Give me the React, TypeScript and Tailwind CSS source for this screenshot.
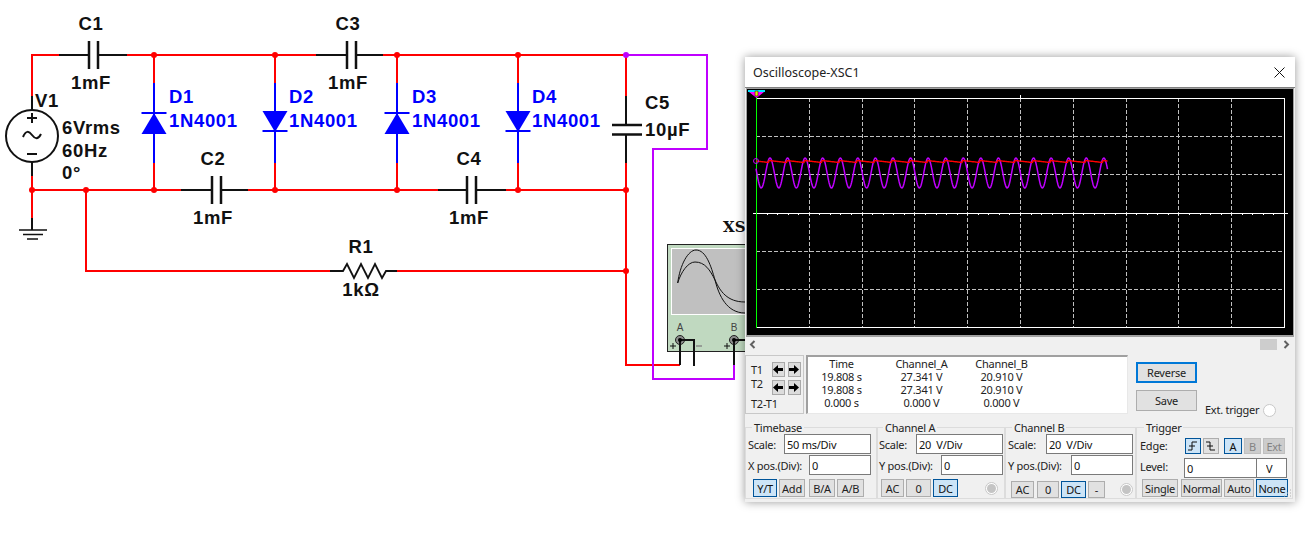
import React from 'react';

const RED = '#ff0000';
const BLUE = '#0000ff';
const PURPLE = '#bf00ff';

const Wire: React.FC<{ d: string; color?: string; w?: number }> = ({ d, color = RED, w = 2 }) => (
  <path d={d} fill="none" stroke={color} strokeWidth={w} />
);

const Dot: React.FC<{ x: number; y: number; color?: string }> = ({ x, y, color = RED }) => (
  <circle cx={x} cy={y} r={3} fill={color} />
);

const Label: React.FC<{ x: number; y: number; mid?: boolean; blue?: boolean; children: React.ReactNode }> = ({ x, y, mid, blue, children }) => (
  <text x={x} y={y - 1} dominantBaseline="central" textAnchor={mid ? 'middle' : 'start'} fill={blue ? BLUE : '#111'} className="font-['Liberation_Sans'] font-bold text-[18.5px] tracking-[0.65px]">
    {children}
  </text>
);

// diode pointing up has the bar on top, pointing down has it at the bottom
const Diode: React.FC<{ x: number; up?: boolean }> = ({ x, up }) => (
  <g>
    <Wire d={`M${x} 55V83`} />
    <Wire d={`M${x} 163V190`} />
    <Wire d={`M${x} 83V163`} color={BLUE} />
    {up ? (
      <>
        <path d={`M${x - 12.5} 113H${x + 12.5}`} stroke={BLUE} strokeWidth={2} />
        <polygon points={`${x},113 ${x + 12.5},134 ${x - 12.5},134`} fill={BLUE} />
      </>
    ) : (
      <>
        <polygon points={`${x - 12.5},111 ${x + 12.5},111 ${x},132`} fill={BLUE} />
        <path d={`M${x - 12.5} 131H${x + 12.5}`} stroke={BLUE} strokeWidth={2} />
      </>
    )}
  </g>
);

// horizontal capacitor, x0..x1 are the lead ends, p1/p2 the plates
const Cap: React.FC<{ x0: number; x1: number; p1: number; p2: number; y: number }> = ({ x0, x1, p1, p2, y }) => (
  <g stroke="#111" strokeWidth={2} fill="none">
    <path d={`M${x0} ${y}H${p1}M${p2} ${y}H${x1}`} />
    <path d={`M${p1} ${y - 14}V${y + 14}M${p2} ${y - 14}V${y + 14}`} strokeWidth={2.5} />
  </g>
);

const Schematic: React.FC = () => (
  <svg width={1305} height={540} className="block">
    {/* wires */}
    <Wire d="M32 96V55H59M127 55H316M383 55H626V96" />
    <Wire d="M32 176V218M32 190H181M248 190H438M506 190H626M626 163V365H680" />
    <Wire d="M86 190V271H330M397 271H626" />
    <Wire d="M626 55H707V149H653V379H734V365" color={PURPLE} />

    {/* C1..C4 */}
    <Cap x0={59} x1={127} p1={89} p2={98} y={55} />
    <Cap x0={316} x1={383} p1={347} p2={356} y={55} />
    <Cap x0={181} x1={248} p1={212} p2={221} y={190} />
    <Cap x0={438} x1={506} p1={467} p2={476} y={190} />

    {/* C5 */}
    <g stroke="#111" fill="none">
      <path d="M626 96V125M626 134V163" strokeWidth={2} />
      <path d="M612 125H642M612 134.5H642" strokeWidth={2.5} />
    </g>

    <Diode x={154} up />
    <Diode x={275} />
    <Diode x={397} up />
    <Diode x={518} />

    {/* V1 */}
    <g stroke="#111" fill="none" strokeWidth={2}>
      <path d="M32 96V110M32 162V176" />
      <circle cx={32} cy={136} r={26} />
      <path d="M27 118H37M32 113V123M27 154H37" />
      <path d="M23 137C26 130 29 131 32 135C35 139 38 140 41 134" />
    </g>

    {/* ground */}
    <g stroke="#111" fill="none" strokeWidth={2}>
      <path d="M32 218V230" />
      <path d="M19 230H47M23 234.5H43M27 239H38" strokeWidth={1.5} />
    </g>

    {/* R1 */}
    <path d="M330 271H343L347 264L354 278L361 264L368 278L375 264L382 278L386 271H397" fill="none" stroke="#111" strokeWidth={1.8} />

    {/* junctions */}
    <Dot x={154} y={55} />
    <Dot x={275} y={55} />
    <Dot x={397} y={55} />
    <Dot x={518} y={55} />
    <Dot x={626} y={55} color={PURPLE} />
    <Dot x={32} y={190} />
    <Dot x={86} y={190} />
    <Dot x={154} y={190} />
    <Dot x={275} y={190} />
    <Dot x={397} y={190} />
    <Dot x={518} y={190} />
    <Dot x={626} y={190} />
    <Dot x={626} y={271} />

    {/* labels */}
    <Label x={91} y={24} mid>C1</Label>
    <Label x={91} y={83} mid>1mF</Label>
    <Label x={348} y={24} mid>C3</Label>
    <Label x={348} y={83} mid>1mF</Label>
    <Label x={213} y={159} mid>C2</Label>
    <Label x={213} y={218} mid>1mF</Label>
    <Label x={469} y={159} mid>C4</Label>
    <Label x={469} y={218} mid>1mF</Label>
    <Label x={35} y={101}>V1</Label>
    <Label x={62} y={128}>6Vrms</Label>
    <Label x={62} y={151}>60Hz</Label>
    <Label x={62} y={173}>0°</Label>
    <Label x={169} y={97} blue>D1</Label>
    <Label x={169} y={121} blue>1N4001</Label>
    <Label x={289} y={97} blue>D2</Label>
    <Label x={289} y={121} blue>1N4001</Label>
    <Label x={412} y={97} blue>D3</Label>
    <Label x={412} y={121} blue>1N4001</Label>
    <Label x={532} y={97} blue>D4</Label>
    <Label x={532} y={121} blue>1N4001</Label>
    <Label x={645} y={103}>C5</Label>
    <Label x={645} y={130}>10µF</Label>
    <Label x={361} y={247} mid>R1</Label>
    <Label x={361} y={290} mid>1kΩ</Label>

    {/* XSC1 instrument */}
    <rect x={667.5} y={244.5} width={110} height={107} fill="#c0d9c0" stroke="#222" />
    <rect x={671.5} y={248.5} width={100} height={66} fill="#c0c0c0" stroke="#fff" />
    <path d="M677.7 283C680 265 688 250 696 250C706 250 711 266 715 280C719 296 727 313 745 313" fill="none" stroke="#111" />
    <path d="M677.7 283C681 272 688 262 695 262C705 262 710 270 715 280C720 291 727 302 745 302" fill="none" stroke="#111" />
    <text x={680} y={327} textAnchor="middle" dominantBaseline="central" fill="#444" className="font-['Liberation_Sans'] text-[10px]">A</text>
    <text x={734} y={327} textAnchor="middle" dominantBaseline="central" fill="#444" className="font-['Liberation_Sans'] text-[10px]">B</text>
    <path d="M670 346H676M673 343V349M724 346H730M727 343V349" stroke="#111" />
    <path d="M696 346H702" stroke="#888" strokeWidth={1.5} />
    <circle cx={680} cy={340} r={4.5} fill="#8c8c8c" stroke="#222" />
    <circle cx={734} cy={340} r={4.5} fill="#8c8c8c" stroke="#222" />
    <path d="M680 340V365M680 340H694V366M734 340V365M734 340H745" fill="none" stroke="#111" strokeWidth={2} />
    <circle cx={680} cy={340} r={2} fill="#000" />
    <circle cx={734} cy={340} r={2} fill="#000" />
    <text x={723} y={227} dominantBaseline="central" fill="#111" className="font-['DejaVu_Serif'] font-bold text-[15px]">XSC1</text>
  </svg>
);

const vGrid = [809, 862, 914, 967, 1020, 1073, 1126, 1178, 1231];
const hGrid = [136, 174, 251, 289];

const samples = Array.from({ length: 704 }, (_, i) => 756 + i * 0.5);
const PERIOD = 17.57;

const purplePts = samples
  .map((x) => `${x},${(173 - 15 * Math.cos((2 * Math.PI * (x - 770)) / PERIOD)).toFixed(1)}`)
  .join(' ');

const redPts = samples
  .map((x) => {
    const phase = (((x - 769) % PERIOD) + PERIOD) % PERIOD;
    return `${x},${(160.5 + (phase / PERIOD) * 2).toFixed(1)}`;
  })
  .join(' ');

const ticks = Array.from({ length: 50 }, (_, i) => 756 + i * 10.56);

// plot coordinates are page coordinates shifted by the viewBox
const ScopePlot: React.FC = () => (
  <svg width={546} height={246} viewBox="747 89 546 246" className="block bg-black">
    <g stroke="#c0c0c0" strokeDasharray="4 2" shapeRendering="crispEdges">
      {vGrid.map((x) => (
        <path key={x} d={`M${x + 0.5} 98V327`} />
      ))}
      {hGrid.map((y) => (
        <path key={y} d={`M756 ${y + 0.5}H1284`} />
      ))}
    </g>
    <g stroke="#fff" fill="none" shapeRendering="crispEdges">
      <path d="M756 98.5H1284.5V327.5H756" />
      <path d="M753 213.5H1288" />
      <path d="M1020.5 95V98" />
      {ticks.map((x) => (
        <path key={x} d={`M${Math.round(x) + 0.5} 214V215`} />
      ))}
    </g>
    <path d="M756.5 92V328" stroke="#00ff00" strokeWidth={1} shapeRendering="crispEdges" />
    <polyline points={purplePts} fill="none" stroke={PURPLE} strokeWidth={1.5} />
    <polyline points={redPts} fill="none" stroke={RED} strokeWidth={1.4} />
    <circle cx={756} cy={161} r={2.5} fill="none" stroke={PURPLE} />
    <rect x={748} y={90} width={17} height={2} fill="#00e5ff" />
    <polygon points="749,92 764,92 756.5,98" fill="#ff00ff" />
    <rect x={755} y={91} width={3} height={5} fill="#e6e600" stroke="#000" strokeWidth={0.5} />
  </svg>
);

type BtnKind = 'normal' | 'active' | 'off';

const kinds: Record<BtnKind, string> = {
  normal: 'bg-[#e1e1e1] border-[#adadad] text-[#222]',
  active: 'bg-[#cce4f7] border-[#005499] text-[#111]',
  off: 'bg-[#cccccc] border-[#bfbfbf] text-[#838383]',
};

const Btn: React.FC<{ kind?: BtnKind; className: string; children: React.ReactNode }> = ({ kind = 'normal', className, children }) => (
  <button className={`flex items-center justify-center border ${kinds[kind]} ${className}`}>{children}</button>
);

const Field: React.FC<{ value: string; className: string }> = ({ value, className }) => (
  <input readOnly value={value} className={`border border-[#7a7a7a] bg-white pl-[2px] text-[#111] outline-none ${className}`} />
);

const Radio: React.FC<{ filled?: boolean }> = ({ filled }) => (
  <span className="flex h-[13px] w-[13px] items-center justify-center rounded-full border border-[#c8c8c8] bg-white">
    {filled && <span className="h-[9px] w-[9px] rounded-full bg-[#c4c4c4]" />}
  </span>
);

const Arrow: React.FC<{ right?: boolean }> = ({ right }) => (
  <button className="flex h-[15px] w-[13px] items-center justify-center border border-[#a9a9a9] bg-[#dcdcdc]">
    <svg width={11} height={9} viewBox="0 0 11 9">
      <path d={right ? 'M0 3H5V0L10 4.5L5 9V6H0Z' : 'M10 3H5V0L0 4.5L5 9V6H10Z'} fill="#000" />
    </svg>
  </button>
);

const Legend: React.FC<{ children: React.ReactNode }> = ({ children }) => (
  <legend className="ml-[4px] px-[2px] leading-[13px]">{children}</legend>
);

const Scope: React.FC = () => (
  <div className="absolute left-[745px] top-[57px] flex h-[445px] w-[550px] flex-col bg-[#f0f0f0] font-['Noto_Sans'] text-[11px] leading-[13px] tracking-[-0.25px] text-[#222] shadow-[0_0_9px_rgba(0,0,0,0.4)]">
    {/* title bar */}
    <div className="flex h-[31px] shrink-0 items-center justify-between border-b border-[#808080] bg-white pl-[8px] pr-[10px] text-[12.5px] tracking-normal">
      <span>Oscilloscope-XSC1</span>
      <svg width={11} height={11} viewBox="0 0 11 11">
        <path d="M0.5 0.5L10.5 10.5M10.5 0.5L0.5 10.5" stroke="#111" fill="none" />
      </svg>
    </div>

    <div className="mx-[1px] h-[247px] shrink-0 bg-[#a0a0a0] px-[1px] pt-[1px]">
      <ScopePlot />
    </div>
    <div className="mx-[1px] h-[2px] shrink-0 bg-[#a0a0a0]" />

    {/* scrollbar */}
    <div className="flex h-[15px] shrink-0 items-center justify-between pl-[4px] pr-[5px]">
      <svg width={7} height={9} viewBox="0 0 7 9">
        <path d="M5.5 1L2 4.5L5.5 8" fill="none" stroke="#606060" strokeWidth={2} />
      </svg>
      <div className="flex items-center gap-[6px]">
        <div className="h-[11px] w-[17px] bg-[#cdcdcd]" />
        <svg width={7} height={9} viewBox="0 0 7 9">
          <path d="M1.5 1L5 4.5L1.5 8" fill="none" stroke="#606060" strokeWidth={2} />
        </svg>
      </div>
    </div>

    {/* cursors and readout */}
    <div className="mt-[3px] flex h-[59px] shrink-0">
      <div className="flex w-[59px] shrink-0 border border-[#c8c8c8] pl-[5px]">
        <div className="flex w-[21px] flex-col pt-[7px] whitespace-nowrap">
          <span>T1</span>
          <span className="mt-[1px]">T2</span>
          <span className="mt-[7px]">T2-T1</span>
        </div>
        <div className="mt-[6px] grid h-fit grid-cols-[13px_13px] gap-x-[3px] gap-y-[3px]">
          <Arrow />
          <Arrow right />
          <Arrow />
          <Arrow right />
        </div>
      </div>
      <div className="ml-[2px] h-[59px] w-[322px] shrink-0 border-b border-l-2 border-r border-t-2 border-b-[#e8e8e8] border-l-[#a0a0a0] border-r-[#e8e8e8] border-t-[#a0a0a0] bg-white">
        <div className="grid grid-cols-[67px_93px_67px] text-center leading-[13px]">
          <span>Time</span><span>Channel_A</span><span>Channel_B</span>
          <span>19.808 s</span><span>27.341 V</span><span>20.910 V</span>
          <span>19.808 s</span><span>27.341 V</span><span>20.910 V</span>
          <span>0.000 s</span><span>0.000 V</span><span>0.000 V</span>
        </div>
      </div>
      <div className="ml-[8px] flex w-[61px] shrink-0 flex-col pt-[7px]">
        <button className="h-[21px] border-2 border-[#0078d7] bg-[#e1e1e1]">Reverse</button>
        <button className="mt-[7px] h-[21px] border border-[#adadad] bg-[#e1e1e1]">Save</button>
      </div>
      <div className="ml-[8px] flex items-end gap-[4px] whitespace-nowrap">
        <span className="mb-[-2px]">Ext. trigger</span>
        <span className="mb-[-3px]"><Radio /></span>
      </div>
    </div>

    {/* control groups */}
    <div className="mt-[7px] flex">
      <fieldset className="h-[78px] w-[132px] border border-[#dcdcdc] pl-[2px] pr-[5px]">
        <Legend>Timebase</Legend>
        <div className="flex h-[20px] items-center justify-between">
          <span>Scale:</span>
          <Field value="50 ms/Div" className="h-[20px] w-[87px]" />
        </div>
        <div className="mt-[1px] flex h-[20px] items-center justify-between">
          <span>X pos.(Div):</span>
          <Field value="0" className="h-[20px] w-[62px]" />
        </div>
        <div className="ml-[5px] mt-[4px] flex">
          <Btn kind="active" className="h-[18px] w-[24px]">Y/T</Btn>
          <Btn className="ml-[2px] h-[18px] w-[26px]">Add</Btn>
          <Btn className="ml-[4px] h-[18px] w-[26px]">B/A</Btn>
          <Btn className="ml-[2px] h-[18px] w-[27px]">A/B</Btn>
        </div>
      </fieldset>

      <fieldset className="h-[78px] w-[128px] border border-[#dcdcdc] pl-[1px] pr-[1px]">
        <Legend>Channel A</Legend>
        <div className="flex h-[20px] items-center justify-between">
          <span>Scale:</span>
          <Field value="20  V/Div" className="h-[20px] w-[87px]" />
        </div>
        <div className="mt-[1px] flex h-[20px] items-center justify-between">
          <span>Y pos.(Div):</span>
          <Field value="0" className="h-[20px] w-[62px]" />
        </div>
        <div className="ml-[2px] mt-[4px] flex items-center">
          <Btn className="h-[18px] w-[23px]">AC</Btn>
          <Btn className="ml-[2px] h-[18px] w-[25px]">0</Btn>
          <Btn kind="active" className="ml-[2px] h-[18px] w-[25px]">DC</Btn>
          <span className="ml-[27px]"><Radio filled /></span>
        </div>
      </fieldset>

      <fieldset className="h-[78px] w-[130px] border border-[#dcdcdc] pl-[2px] pr-[2px]">
        <Legend>Channel B</Legend>
        <div className="flex h-[20px] items-center justify-between">
          <span>Scale:</span>
          <Field value="20  V/Div" className="h-[20px] w-[87px]" />
        </div>
        <div className="mt-[1px] flex h-[20px] items-center justify-between">
          <span>Y pos.(Div):</span>
          <Field value="0" className="h-[20px] w-[62px]" />
        </div>
        <div className="ml-[3px] mt-[6px] flex items-center">
          <Btn className="h-[17px] w-[23px]">AC</Btn>
          <Btn className="ml-[3px] h-[17px] w-[22px]">0</Btn>
          <Btn kind="active" className="ml-[2px] h-[17px] w-[25px]">DC</Btn>
          <Btn className="ml-[2px] h-[17px] w-[17px]">-</Btn>
          <span className="ml-[15px]"><Radio filled /></span>
        </div>
      </fieldset>

      <fieldset className="relative h-[78px] w-[157px] border border-[#dcdcdc] pl-[3px] pr-[3px]">
        <Legend>Trigger</Legend>
        <div className="mt-[4px] flex h-[16px] items-center">
          <span className="mt-[-2px] w-[45px]">Edge:</span>
          <Btn kind="active" className="h-[16px] w-[16px]">
            <svg width={10} height={10} viewBox="0 0 10 10"><path d="M0 9H4V1H9M1 5H7" fill="none" stroke="#111" /></svg>
          </Btn>
          <Btn className="ml-[2px] h-[16px] w-[16px]">
            <svg width={10} height={10} viewBox="0 0 10 10"><path d="M0 1H4V9H9M1 5H7" fill="none" stroke="#111" /></svg>
          </Btn>
          <Btn kind="active" className="ml-[5px] h-[16px] w-[18px]">A</Btn>
          <Btn kind="off" className="ml-[2px] h-[16px] w-[17px]">B</Btn>
          <Btn kind="off" className="ml-[2px] h-[16px] w-[22px]">Ext</Btn>
        </div>
        <div className="mt-[4px] flex h-[20px] items-center">
          <span className="mt-[-3px] w-[44px]">Level:</span>
          <Field value="0" className="h-[20px] w-[73px]" />
          <Field value="V" className="h-[20px] w-[30px] border-l-0 pl-[9px]" />
        </div>
        <div className="ml-[2px] mt-[1px] flex">
          <Btn className="h-[18px] w-[36px]">Single</Btn>
          <Btn className="ml-[3px] h-[18px] w-[41px]">Normal</Btn>
          <Btn className="ml-[2px] h-[18px] w-[30px]">Auto</Btn>
          <Btn kind="active" className="ml-[2px] h-[18px] w-[32px]">None</Btn>
        </div>
        {/* resize grip */}
        <svg width={9} height={9} viewBox="0 0 9 9" className="absolute bottom-[0px] right-[0px]">
          <path d="M7 1H8M4 4H5M7 4H8M1 7H2M4 7H5M7 7H8" stroke="#b0b0b0" fill="none" />
        </svg>
      </fieldset>
    </div>
  </div>
);

export default function App() {
  return (
    <div className="relative h-[540px] w-[1305px] overflow-hidden bg-white">
      <Schematic />
      <Scope />
    </div>
  );
}
